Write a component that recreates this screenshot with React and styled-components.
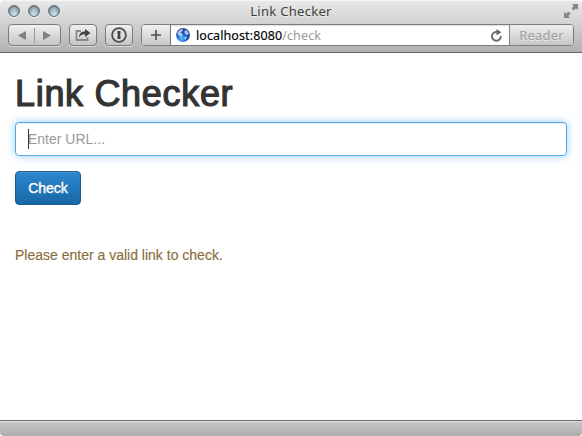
import React from 'react';
import styled, { createGlobalStyle } from 'styled-components';

const GlobalStyle = createGlobalStyle`
  * { box-sizing: border-box; }
  html, body { margin: 0; background: #fff; overflow: hidden; }
`;

const Window = styled.div`
  display: flex;
  flex-direction: column;
  width: 582px;
  height: 436px;
  overflow: hidden;
  background: #fff;
  border-radius: 5px 5px 4px 4px;
  font-family: 'Liberation Sans', Arial, sans-serif;
`;

const Chrome = styled.header`
  flex: none;
  height: 53px;
  border-bottom: 1px solid #646464;
  background: linear-gradient(#e9e9e9, #d2d2d2 45%, #b1b1b1);
  box-shadow: inset 0 1px #f5f5f5;
  font-family: 'Noto Sans', 'Open Sans', sans-serif;
`;

const TitleBar = styled.div`
  display: grid;
  grid-template-columns: 60px 1fr 60px;
  height: 24px;
  padding: 0 4px;
`;

const Lights = styled.div`
  display: flex;
  gap: 8px;
  padding: 5px 0 0 4px;
`;

const Light = styled.span`
  width: 12px;
  height: 12px;
  border: 1px solid #64717a;
  border-radius: 50%;
  background: radial-gradient(ellipse at 50% 90%, #d5e4ec 0, #a8bdc9 45%, #788d9b 90%);
  box-shadow: 0 1px #f1f1f1, inset 0 1px 1px #65737d;
`;

const WindowTitle = styled.div`
  text-align: center;
  font-size: 13px;
  line-height: 23px;
  letter-spacing: 0.3px;
  color: #3d3d3d;
  text-shadow: 0 1px rgba(255, 255, 255, 0.5);
`;

const ExpandIcon = styled.svg`
  justify-self: end;
  margin-top: 4px;
  width: 14px;
  height: 14px;
  fill: #858585;
`;

const Toolbar = styled.nav`
  display: flex;
  gap: 8px;
  padding: 0 8px;
`;

const ToolButton = styled.button`
  display: flex;
  align-items: center;
  justify-content: center;
  flex: none;
  width: ${({ $width }) => $width}px;
  height: 22px;
  padding: 0;
  border: 1px solid #7d7d7d;
  border-radius: 4px;
  background: linear-gradient(#f0f0f0, #c5c5c5);
  box-shadow: 0 1px rgba(255, 255, 255, 0.45);
`;

const AddressGroup = styled.div`
  display: flex;
  flex: 1;
  height: 22px;
  border: 1px solid #7d7d7d;
  border-radius: 4px;
  overflow: hidden;
  background: #fff;
`;

const AddButton = styled.button`
  display: flex;
  align-items: center;
  justify-content: center;
  width: 29px;
  padding: 0;
  border: 0;
  border-right: 1px solid #777;
  background: linear-gradient(#f0f0f0, #c8c8c8);
`;

const Address = styled.div`
  display: flex;
  align-items: center;
  flex: 1;
  padding: 0 6px 0 5px;
  background: #fff;
  box-shadow: inset 0 1px 1px #ddd;
  font-size: 12.5px;
  line-height: 20px;
  white-space: nowrap;
`;

const Host = styled.span`
  margin-left: 6px;
  padding-top: 1px;
  letter-spacing: 0.1px;
  color: #000;
  -webkit-text-stroke: 0.15px #000;
`;

const Path = styled.span`
  flex: 1;
  padding-top: 1px;
  letter-spacing: 0.15px;
  color: #999;
`;

const Reader = styled.button`
  width: 64px;
  padding: 0;
  border: 0;
  border-left: 1px solid #858585;
  background: linear-gradient(#eee, #c7c7c7);
  color: #a0a0a0;
  font: 13px/19px 'Noto Sans', sans-serif;
  letter-spacing: 0.2px;
  text-shadow: 0 1px #e8e8e8;
`;

const Page = styled.main`
  flex: 1;
  padding: 21px 15px 0;
`;

const Heading = styled.h1`
  margin: 0 0 9px;
  font-size: 36px;
  font-weight: 400;
  line-height: 39px;
  letter-spacing: 0.68px;
  color: #333;
  -webkit-text-stroke: 1.2px #333;
`;

const UrlInput = styled.input`
  display: block;
  width: 100%;
  height: 34px;
  padding: 6px 12px;
  border: 1px solid #52a8ec;
  border-radius: 4px;
  outline: 0;
  box-shadow: inset 0 1px 1px rgba(0, 0, 0, 0.075), 0 0 8px rgba(82, 168, 236, 0.6);
  font: 14px/20px 'Liberation Sans', Arial, sans-serif;
  color: #555;
  &::placeholder { color: #999; opacity: 1; }
`;

const Field = styled.div`
  position: relative;
`;

const Caret = styled.span`
  position: absolute;
  left: 13px;
  top: 7px;
  width: 1px;
  height: 20px;
  background: #333;
`;

const CheckButton = styled.button`
  display: block;
  width: 66px;
  height: 34px;
  margin-top: 15px;
  padding: 0;
  border: 1px solid #1b6091;
  border-radius: 4px;
  background: linear-gradient(#2d87d0, #1768a5);
  box-shadow: inset 0 1px rgba(255, 255, 255, 0.12);
  color: #fff;
  font: 14px/20px 'Liberation Sans', Arial, sans-serif;
  -webkit-text-stroke: 0.4px #fff;
  text-shadow: 0 -1px rgba(0, 0, 0, 0.2);
`;

const Message = styled.p`
  margin: 40px 0 0;
  font-size: 14px;
  line-height: 20px;
  color: #8a6d3b;
  -webkit-text-stroke: 0.15px #8a6d3b;
`;

const StatusBar = styled.footer`
  flex: none;
  height: 16px;
  border-top: 1px solid #696969;
  background: linear-gradient(#c9c9c9, #adadad);
  box-shadow: inset 0 1px #dedede;
`;

export default function App() {
  return (
    <>
      <GlobalStyle />
      <Window>
        <Chrome>
          <TitleBar>
            <Lights><Light /><Light /><Light /></Lights>
            <WindowTitle>Link Checker</WindowTitle>
            <ExpandIcon viewBox="0 0 14 14">
              <path d="M8 0h6v6l-2-1.700-2.300 2.200-2.200-2.200L9.700 2zM0 8l2 1.700 2.300-2.200 2.200 2.200L4.300 12 6 14H0z" />
            </ExpandIcon>
          </TitleBar>
          <Toolbar>
            <ToolButton $width={53} aria-label="Back and forward">
              <svg width="51" height="20">
                <path d="M17 6v9l-8-4.500zM34 6v9l8-4.500z" fill="#808080" />
                <path d="M25.500 3v15" stroke="#999" />
              </svg>
            </ToolButton>
            <ToolButton $width={28} aria-label="Share">
              <svg width="18" height="16" viewBox="0 0 18 16">
                <path d="M7 4H2.500v9h11V10" fill="none" stroke="#888" strokeWidth="1.800" />
                <path d="M5 10.500C5.200 6 7.500 4.500 11 4.500V2l5.500 4-5.500 4V7.200C8 7.100 6.500 8 5 10.500z" fill="#444" />
              </svg>
            </ToolButton>
            <ToolButton $width={28} aria-label="Passwords">
              <svg width="18" height="18" viewBox="0 0 18 18">
                <circle cx="9" cy="9" r="6.900" fill="#ddd" stroke="#4c4c4c" strokeWidth="1.800" />
                <path d="M7.500 5h3v3l-.6 1 .6 1v3h-3v-3l.6-1-.6-1z" fill="#444" />
              </svg>
            </ToolButton>
            <AddressGroup>
              <AddButton aria-label="Add bookmark">
                <svg width="12" height="12"><path d="M6 1v10M1 6h10" stroke="#4c4c4c" strokeWidth="1.600" /></svg>
              </AddButton>
              <Address>
                <svg width="14" height="14" viewBox="0 0 14 14">
                  <defs>
                    <radialGradient id="globe" cx=".4" cy=".75">
                      <stop stopColor="#58c0ff" /><stop offset=".6" stopColor="#2870d8" /><stop offset="1" stopColor="#2446a0" />
                    </radialGradient>
                  </defs>
                  <circle cx="7" cy="7" r="6.900" fill="url(#globe)" />
                  <path d="M1.500 4.500l2-2.500 3-1 .7 1-1.200 1.500-1.500 1 1.500 1 .5 1.500-1.500 2-2-2-1.500-.5zM8.500 3l2-1 2 3-.5 2-2-.5-1.500-1.500zM8.500 9l2.500-.5-1.500 3-1-.5z" fill="#d9f2ff" opacity=".75" />
                </svg>
                <Host>localhost:8080</Host>
                <Path>/check</Path>
                <svg width="13" height="13" viewBox="0 0 12 12">
                  <path d="M10 6.500A4.100 4.100 0 1 1 6.500 2.700" fill="none" stroke="#666" strokeWidth="1.700" />
                  <path d="M6 0l4.500 3L6 6z" fill="#666" />
                </svg>
              </Address>
              <Reader>Reader</Reader>
            </AddressGroup>
          </Toolbar>
        </Chrome>
        <Page>
          <Heading>Link Checker</Heading>
          <Field>
            <UrlInput placeholder="Enter URL..." />
            <Caret />
          </Field>
          <CheckButton>Check</CheckButton>
          <Message>Please enter a valid link to check.</Message>
        </Page>
        <StatusBar />
      </Window>
    </>
  );
}
